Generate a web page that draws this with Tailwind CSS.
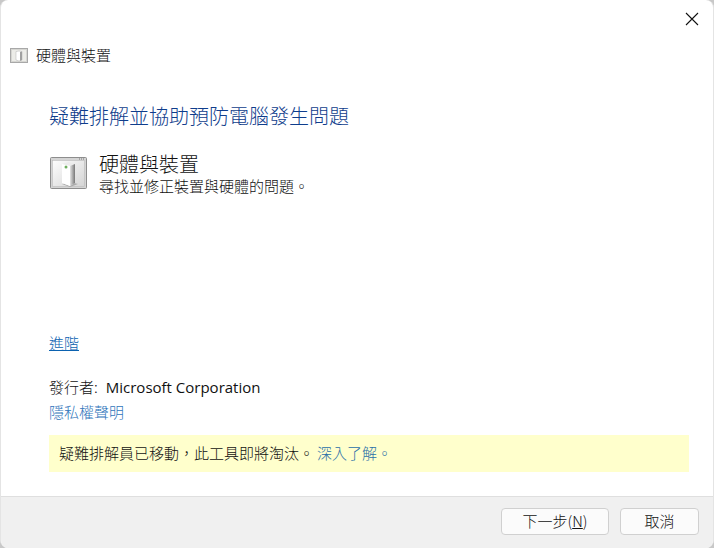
<!DOCTYPE html>
<html lang="zh-Hant">
<head>
    <meta charset="UTF-8">
    <title>硬體與裝置</title>
    <script src="https://cdn.jsdelivr.net/npm/@tailwindcss/browser@4"></script>
</head>
<body class="bg-[#c8c8c8] overflow-hidden">
    <div class="w-[714px] h-[548px] bg-white rounded-lg border-l border-r border-[#e4e4e4] overflow-hidden flex flex-col text-[#111] font-['Noto_Sans_CJK_TC',sans-serif]">
        <!-- title bar -->
        <div class="h-[36px] flex justify-end items-start">
            <svg class="mt-[12px] mr-[14px]" width="14" height="14" viewBox="0 0 14 14" fill="none" stroke="#111" stroke-width="1.1"><path d="M1 1L13 13M13 1L1 13"/></svg>
        </div>

        <!-- breadcrumb -->
        <div class="h-[38px] pl-[9px] flex items-center gap-[8px] text-[15px] font-light">
            <svg width="18" height="15" viewBox="0 0 18 15">
                <rect x="0.5" y="0.5" width="17" height="14" fill="#d6d6d2" stroke="#a8a8a8"/>
                <rect x="2" y="2" width="14" height="11" fill="#ecece8"/>
                <path d="M6 3.5L9 3L12 3.5V12L9 13L6 12Z" fill="#fff" stroke="#b0b0b0" stroke-width="0.5"/>
                <path d="M10 4L12 3.5V12L10 13Z" fill="#a0a0a0"/>
            </svg>
            <span>硬體與裝置</span>
        </div>

        <div class="flex-1 flex flex-col pl-[48px] pr-[24px]">
            <h1 class="mt-[23px] h-[38px] text-[20px] leading-[38px] font-light text-[#0f3d8c]">疑難排解並協助預防電腦發生問題</h1>

            <!-- troubleshooter entry -->
            <div class="mt-[14px] flex items-start gap-[12px]">
                <svg class="mt-[8px] ml-[1px]" width="37" height="32" viewBox="0 0 37 32">
                    <defs>
                        <linearGradient id="pane" x1="0" y1="0" x2="1" y2="1">
                            <stop offset="0" stop-color="#fdfdfd"/>
                            <stop offset="1" stop-color="#d4d4d4"/>
                        </linearGradient>
                        <linearGradient id="side" x1="0" y1="0" x2="1" y2="0">
                            <stop offset="0" stop-color="#e4e4e4"/>
                            <stop offset="1" stop-color="#777"/>
                        </linearGradient>
                    </defs>
                    <rect x="0.5" y="0.5" width="36" height="31" rx="1" fill="#d4d4d4" stroke="#8d8d8d"/>
                    <rect x="2.5" y="3.5" width="32" height="26" fill="url(#pane)" stroke="#b5b5b5" stroke-width="0.5"/>
                    <path d="M29 2h1M31 2h1M33 2h1" stroke="#777"/>
                    <path d="M12 27L20 30L28 27L20 25Z" fill="#aaa"/>
                    <path d="M12 7L19 5L25 7V26L20 29L12 26Z" fill="#ececec"/>
                    <path d="M12 7L20 9V29L12 26Z" fill="#fff"/>
                    <path d="M20 9L25 7V26L20 29Z" fill="url(#side)"/>
                    <circle cx="16" cy="10" r="1.5" fill="#6fae5f"/>
                </svg>
                <div>
                    <div class="mt-[3px] h-[24px] text-[20px] leading-[24px] font-light">硬體與裝置</div>
                    <div class="h-[20px] text-[15px] leading-[20px] font-light">尋找並修正裝置與硬體的問題。</div>
                </div>
            </div>

            <a class="mt-[137px] h-[20px] text-[15px] leading-[20px] font-light text-[#0b62b0] underline">進階</a>

            <div class="mt-[24px] h-[20px] text-[15px] leading-[20px] font-light flex gap-[8px]"><span>發行者:</span><span class="font-['Open_Sans'] font-normal">Microsoft Corporation</span></div>
            <a class="mt-[5px] h-[20px] text-[15px] leading-[20px] font-light text-[#2f75bb]">隱私權聲明</a>

            <!-- notice -->
            <div class="mt-[13px] h-[37px] bg-[#ffffcc] pl-[10px] flex items-center text-[15px] font-light">
                <span>疑難排解員已移動&#xFF0C;此工具即將淘汰。</span>
                <a class="ml-[3px] text-[#2a6fa8]">深入了解。</a>
            </div>
        </div>

        <!-- footer -->
        <div class="h-[52px] bg-[#f0f0f0] border-t border-[#dfdfdf] flex justify-end items-start gap-[11px] pt-[11px] pr-[14px] text-[15px]">
            <button class="w-[108px] h-[27px] pb-[2px] bg-[#fbfbfb] border border-[#d0d0d0] rounded-[4px] leading-none font-light">下一步(<span class="underline">N</span>)</button>
            <button class="w-[79px] h-[27px] pb-[2px] bg-[#fbfbfb] border border-[#d0d0d0] rounded-[4px] leading-none font-light">取消</button>
        </div>
    </div>
</body>
</html>
